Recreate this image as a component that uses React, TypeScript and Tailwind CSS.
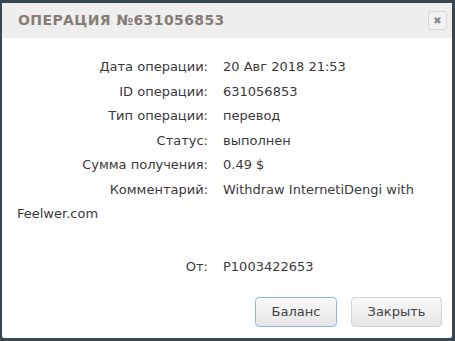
const ROWS = [
    { label: "Дата операции:", value: "20 Авг 2018 21:53" },
    { label: "ID операции:", value: "631056853" },
    { label: "Тип операции:", value: "перевод" },
    { label: "Статус:", value: "выполнен" },
    { label: "Сумма получения:", value: "0.49 $" },
    { label: "Комментарий:", value: "Withdraw InternetiDengi with Feelwer.com" },
];

export default function App() {
    return (
        <div className="w-[455px] h-[341px] bg-[#37464f] pt-[3px] pl-[2px] pr-[3px] pb-[3px] overflow-hidden">
            <div className="h-full bg-white flex flex-col rounded-[2px]">
                {/* Header */}
                <div className="h-[35px] bg-[#eeeeee] flex items-center justify-between pl-[16px] pr-[5px] shrink-0">
                    <h1 className="text-[14px] font-bold tracking-[0.4px] text-[#867d75] font-['DejaVu_Sans',sans-serif]">
                        ОПЕРАЦИЯ №631056853
                    </h1>
                    <button className="w-[19px] h-[19px] rounded-[3px] border border-[#d6d6d6] bg-[#f2f2f2] flex items-center justify-center text-[10px] leading-none text-[#8a8a8a] font-['DejaVu_Sans',sans-serif]">
                        ✖
                    </button>
                </div>

                {/* Body */}
                <div className="flex-1 pt-[17px] pl-[15px] pr-[12px] text-[13px] leading-[24.5px] text-[#3a3a3a] font-['DejaVu_Sans',sans-serif]">
                    {ROWS.map((r) => (
                        <p key={r.label}>
                            <span className="inline-block w-[191px] text-right mr-[15px]">{r.label}</span>
                            {r.value}
                        </p>
                    ))}
                    <p className="mt-[28px]">
                        <span className="inline-block w-[191px] text-right mr-[15px]">От:</span>
                        P1003422653
                    </p>
                </div>

                {/* Footer */}
                <div className="flex justify-end gap-[14px] pr-[10px] pb-[11px] font-['DejaVu_Sans',sans-serif] text-[13px] text-[#444]">
                    <button className="w-[82px] h-[30px] rounded-[4px] border border-[#90b4ee] bg-gradient-to-b from-[#f9f9f9] to-[#e6e6e6]">
                        Баланс
                    </button>
                    <button className="w-[91px] h-[30px] rounded-[4px] border border-[#d3d3d3] bg-gradient-to-b from-[#f9f9f9] to-[#e6e6e6]">
                        Закрыть
                    </button>
                </div>
            </div>
        </div>
    );
}
